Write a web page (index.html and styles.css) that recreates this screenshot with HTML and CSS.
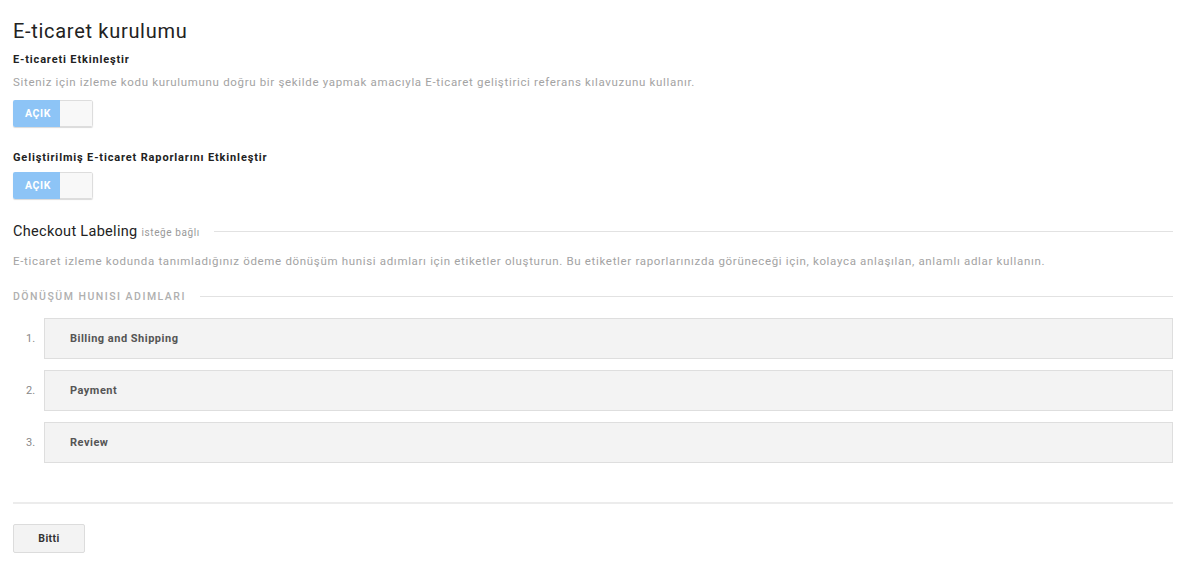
FILE: index.html
```html
<!DOCTYPE html>
<html lang="tr">
<head>
  <meta charset="UTF-8">
  <title>E-ticaret kurulumu</title>
  <link rel="stylesheet" href="styles.css">
</head>
<body>
  <div class="page">
    <h1 class="title">E-ticaret kurulumu</h1>

    <div class="setting">
      <h2 class="label">E-ticareti Etkinleştir</h2>
      <p class="desc">Siteniz için izleme kodu kurulumunu doğru bir şekilde yapmak amacıyla E-ticaret geliştirici referans kılavuzunu kullanır.</p>
      <div class="toggle"><span class="on">AÇIK</span><span class="off"></span></div>
    </div>

    <div class="setting second">
      <h2 class="label">Geliştirilmiş E-ticaret Raporlarını Etkinleştir</h2>
      <div class="toggle"><span class="on">AÇIK</span><span class="off"></span></div>
    </div>

    <div class="section-head">
      <span class="section-title">Checkout Labeling</span>
      <span class="optional">isteğe bağlı</span>
      <span class="rule"></span>
    </div>
    <p class="desc wide">E-ticaret izleme kodunda tanımladığınız ödeme dönüşüm hunisi adımları için etiketler oluşturun. Bu etiketler raporlarınızda görüneceği için, kolayca anlaşılan, anlamlı adlar kullanın.</p>

    <div class="sub-head">
      <span class="sub-title">DÖNÜŞÜM HUNISI ADIMLARI</span>
      <span class="rule"></span>
    </div>

    <ol class="steps">
      <li class="step"><span class="num">1.</span><div class="box">Billing and Shipping</div></li>
      <li class="step"><span class="num">2.</span><div class="box">Payment</div></li>
      <li class="step"><span class="num">3.</span><div class="box">Review</div></li>
    </ol>

    <div class="footer">
      <button class="btn">Bitti</button>
    </div>
  </div>
</body>
</html>
```

FILE: styles.css
```css
* {
  margin: 0;
  padding: 0;
  box-sizing: border-box;
}
body {
  font-family: Roboto, "Liberation Sans", Arial, sans-serif;
  color: #222;
  background: #fff;
}
.page {
  width: 1173px;
  padding: 18px 0 0 13px;
}
.title {
  font-size: 20px;
  font-weight: 400;
  line-height: 26px;
  letter-spacing: 0.7px;
  color: #222;
}
.setting {
  margin-top: 8px;
}
.setting.second {
  margin-top: 23px;
}
.label {
  font-size: 11px;
  font-weight: 700;
  line-height: 16px;
  letter-spacing: 0.85px;
  color: #222;
}
.desc {
  font-size: 11.5px;
  line-height: 16px;
  letter-spacing: 0.67px;
  color: #a3a3a3;
  margin-top: 6px;
}
.setting.second .toggle {
  margin-top: 6px;
}
.toggle {
  display: flex;
  width: 80px;
  height: 27px;
  margin-top: 10px;
  border-radius: 2px;
  overflow: hidden;
  box-shadow: 0 1px 1px rgba(0, 0, 0, 0.15);
}
.toggle .on {
  width: 47px;
  background: #8dc4f6;
  color: #fff;
  font-size: 10.5px;
  font-weight: 700;
  letter-spacing: 0.6px;
  line-height: 27px;
  padding-left: 12px;
}
.toggle .off {
  flex: 1;
  background: #f8f8f8;
  border: 1px solid #ddd;
  border-left: none;
  border-radius: 0 2px 2px 0;
}
.section-head {
  display: flex;
  align-items: center;
  margin-top: 22px;
  height: 20px;
}
.section-title {
  font-size: 14.5px;
  letter-spacing: 0.3px;
  color: #222;
}
.optional {
  font-size: 10px;
  letter-spacing: 0.6px;
  color: #999;
  margin-left: 4px;
  margin-top: 2px;
}
.rule {
  flex: 1;
  height: 1px;
  background: #e2e2e2;
  margin-left: 14px;
}
.desc.wide {
  margin-top: 12px;
}
.sub-head {
  display: flex;
  align-items: center;
  margin-top: 20px;
  height: 14px;
}
.sub-title {
  font-size: 10.5px;
  font-weight: 500;
  letter-spacing: 1.5px;
  color: #b0b0b0;
}
.steps {
  list-style: none;
  margin-top: 15px;
}
.step {
  display: flex;
  align-items: center;
  margin-bottom: 11px;
}
.num {
  width: 31px;
  padding-left: 13px;
  font-size: 11px;
  color: #888;
}
.box {
  flex: 1;
  height: 41px;
  line-height: 39px;
  background: #f3f3f3;
  border: 1px solid #dedede;
  padding-left: 25px;
  font-size: 11px;
  font-weight: 700;
  letter-spacing: 0.5px;
  color: #555;
}
.footer {
  margin-top: 39px;
  border-top: 2px solid #ececec;
  padding-top: 20px;
}
.btn {
  width: 72px;
  height: 29px;
  background: #f3f3f3;
  border: 1px solid #dcdcdc;
  border-radius: 2px;
  font-family: Roboto, "Liberation Sans", Arial, sans-serif;
  font-size: 10.5px;
  font-weight: 700;
  letter-spacing: 0.4px;
  color: #333;
}
```
